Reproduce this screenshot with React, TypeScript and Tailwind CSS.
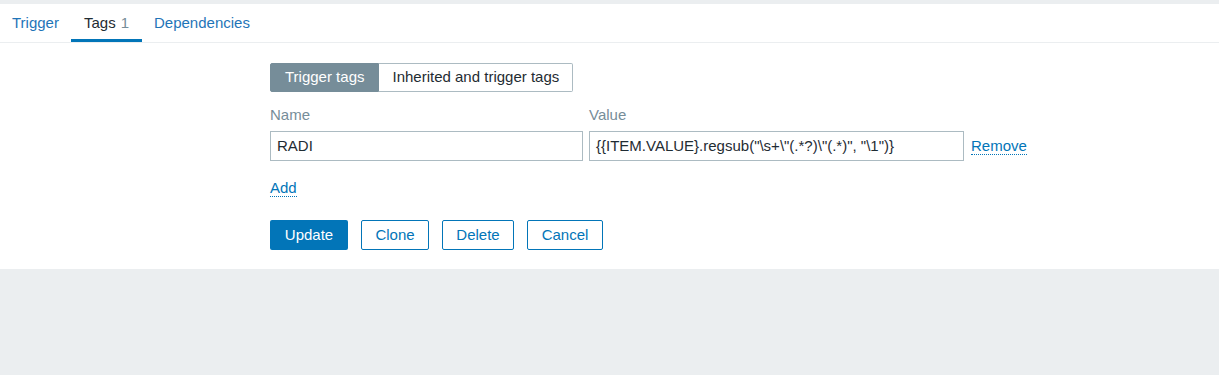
import React from "react";

export default function App() {
  return (
    <div
      className="min-h-[375px] w-full bg-[#ebeef0] pt-[4px] text-[15px] text-[#1f2c33]"
      style={{ fontFamily: '"Liberation Sans", Arial, sans-serif' }}
    >
      <div className="bg-white pb-[19px]">
        {/* Tabs */}
        <div className="flex h-[39px] border-b border-[#ebeef0]">
          <div className="flex items-center px-[12px] pt-[2px] pb-[1px] text-[#1f75b8]">Trigger</div>
          <div className="flex items-center border-b-[3px] border-[#0275b8] px-[13px] pt-[3px] text-[#1f2c33]">
            Tags<span className="ml-[5px] text-[#768d99]">1</span>
          </div>
          <div className="flex items-center px-[12px] pt-[2px] pb-[1px] text-[#1f75b8]">Dependencies</div>
        </div>

        <div className="pl-[270px] pt-[20px]">
          {/* Segmented */}
          <div className="flex h-[29px]">
            <div className="flex items-center rounded-l-[2px] border border-[#768d99] bg-[#768d99] px-[14px] text-white">
              Trigger tags
            </div>
            <div className="flex items-center rounded-r-[2px] border border-l-0 border-[#acbbc2] px-[13px] text-[#1f2c33]">
              Inherited and trigger tags
            </div>
          </div>

          {/* Labels */}
          <div className="mt-[15px] flex h-[17px] items-center text-[#768d99]">
            <div className="w-[319px]">Name</div>
            <div>Value</div>
          </div>

          {/* Row */}
          <div className="mt-[7px] flex items-center">
            <div className="flex h-[30px] w-[313px] items-center border border-[#acbbc2] px-[6px]">RADI</div>
            <div className="ml-[6px] flex h-[30px] w-[375px] items-center border border-[#acbbc2] px-[6px]">
              {'{{ITEM.VALUE}.regsub("\\s+\\"(.*?)\\"(.*)", "\\1")}'}
            </div>
            <span className="ml-[7px] border-b border-dotted border-[#0275b8] leading-[16px] text-[#0275b8]">Remove</span>
          </div>

          {/* Add */}
          <div className="mt-[19px] flex h-[17px] items-center">
            <span className="border-b border-dotted border-[#0275b8] leading-[16px] text-[#0275b8]">Add</span>
          </div>

          {/* Buttons */}
          <div className="mt-[23px] flex h-[30px] gap-[13px]">
            <button className="h-[30px] w-[78px] rounded-[2px] bg-[#0275b8] text-white">Update</button>
            <button className="h-[30px] w-[68px] rounded-[2px] border border-[#0275b8] text-[#0275b8]">Clone</button>
            <button className="h-[30px] w-[72px] rounded-[2px] border border-[#0275b8] text-[#0275b8]">Delete</button>
            <button className="h-[30px] w-[76px] rounded-[2px] border border-[#0275b8] text-[#0275b8]">Cancel</button>
          </div>
        </div>
      </div>
    </div>
  );
}
